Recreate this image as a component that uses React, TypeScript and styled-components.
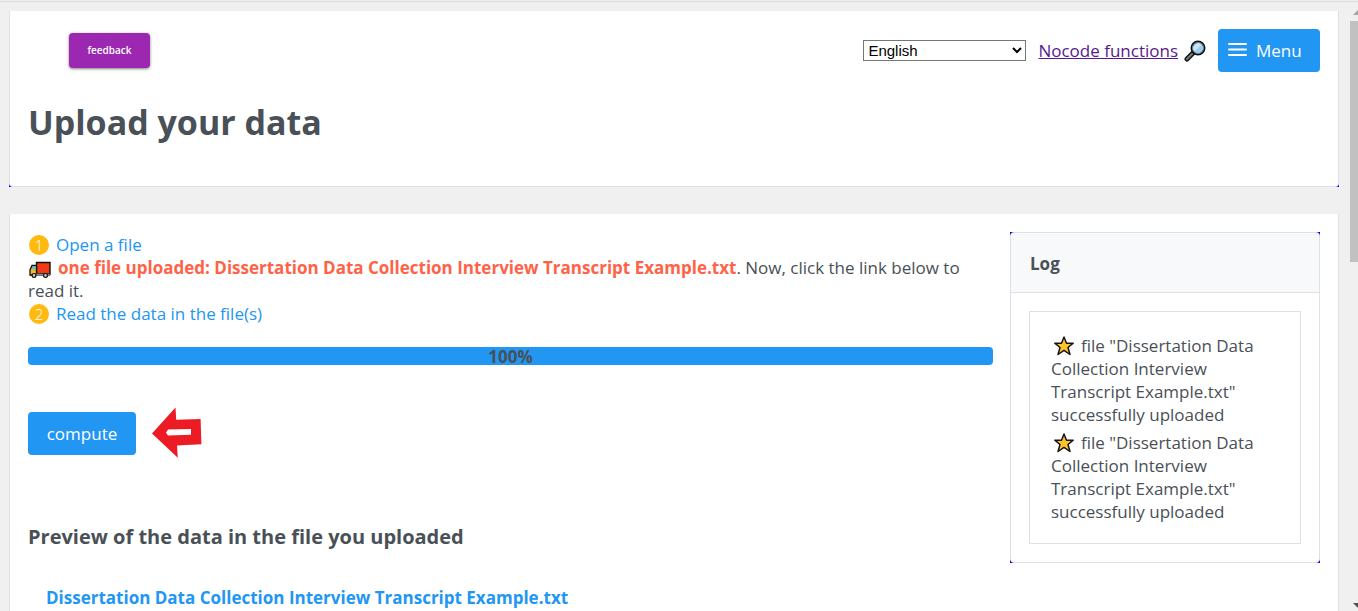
import React from "react";
import styled, { createGlobalStyle } from "styled-components";

const GlobalStyle = createGlobalStyle`
  * { box-sizing: border-box; }
  body {
    margin: 0;
    background: #f0f0f0;
    color: #495057;
    font: 400 17px/23px "Segoe UI", "Open Sans", "Noto Sans", sans-serif;
  }
  h1, h2, h3, p, ul { margin: 0; padding: 0; }
  button { font: inherit; cursor: pointer; }
`;

const Frame = styled.div`
  display: flex;
  height: 100vh;
  overflow: hidden;
  border-top: 1px solid #f0f0f0;
`;

const Page = styled.div`
  flex: 1;
  min-width: 0;
  border-top: 1px solid #d9dbdc;
  padding: 9px 11px 0 9px;
  display: flex;
  flex-direction: column;
  gap: 27px;
`;

const ScrollTrack = styled.div`
  width: 8px;
  flex: none;
  display: flex;
  flex-direction: column;
  justify-content: space-between;
  padding: 8px 0 3px;
  overflow: hidden;
  border-top: 1px solid #d9dbdc;
`;

const ScrollTop = styled.div`
  display: flex;
  flex-direction: column;
  gap: 6px;
`;

const ScrollThumb = styled.div`
  height: 241px;
  background: #c1c1c1;
`;

const Arrow = styled.svg`
  display: block;
  flex: none;
  align-self: flex-end;
`;

const BlueEdge = styled.div`
  background: #00f;
`;

const Card = styled.section`
  background: #fff;
  border: 1px solid #dee2e6;
  border-top: 0;
  padding: 18px;
`;

const HeaderCard = styled(Card)`
  border-radius: 0 0 4px 4px;
  padding-bottom: 41px;
`;

const Toolbar = styled.header`
  display: flex;
  align-items: center;
  height: 43px;
`;

const Feedback = styled.button`
  width: 81px;
  height: 35px;
  margin-left: 41px;
  margin-right: auto;
  padding: 0;
  border: 0;
  border-radius: 4px;
  background: #9c27b0;
  box-shadow: 0 1px 3px rgba(0, 0, 0, 0.5);
  color: #fff;
  font-size: 10px;
  font-weight: 600;
`;

const Language = styled.select`
  width: 163px;
  height: 21px;
  margin-right: 12px;
  padding: 0;
  border: 1px solid #767676;
  border-radius: 0;
  background: #fff;
  color: #000;
  font: 15px "Liberation Sans", Arial, sans-serif;
`;

const SiteLink = styled.a`
  color: #551a8b;
  margin-right: 6px;
`;

const Button = styled.button`
  display: flex;
  align-items: center;
  justify-content: center;
  gap: 9px;
  height: 43px;
  padding: 0;
  border: 0;
  border-radius: 4px;
  background: #2196f3;
  color: #fff;
`;

const MenuButton = styled(Button)`
  width: 102px;
  margin-left: 12px;
  padding-left: 10px;
  justify-content: flex-start;
`;

const ComputeButton = styled(Button)`
  width: 108px;
`;

const Title = styled.h1`
  margin-top: 27px;
  font-size: 34px;
  line-height: 46px;
  font-weight: 700;
`;

const Columns = styled.div`
  display: flex;
  align-items: flex-start;
  gap: 17px;
`;

const Main = styled.main`
  flex: 1;
  min-width: 0;
  padding-top: 1px;
`;

const Step = styled.div`
  display: flex;
  align-items: center;
  gap: 7px;
  padding-left: 1px;
`;

const StepNumber = styled.span`
  width: 20px;
  height: 20px;
  border-radius: 50%;
  background: #ffb90f;
  color: #fff;
  font-size: 15px;
  line-height: 20px;
  font-weight: 300;
  text-align: center;
`;

const StepLink = styled.a`
  color: #2196f3;
  text-decoration: none;
`;

const Uploaded = styled.strong`
  color: #ff6347;
  font-weight: 700;
`;

const InlineIcon = styled.svg`
  vertical-align: -4px;
  margin: 0 7px 0 1px;
`;

const Progress = styled.div`
  height: 18px;
  margin: 22px 0 42px;
  border-radius: 4px;
  background: #2196f3;
  text-align: center;
  font-weight: 700;
  line-height: 19px;
`;

const ComputeRow = styled.div`
  display: flex;
  align-items: center;
  gap: 16px;
`;

const PreviewTitle = styled.h2`
  margin-top: 64px;
  font-size: 20px;
  line-height: 28px;
  font-weight: 700;
`;

const FileLink = styled.a`
  display: block;
  margin: 35px 18px 0;
  color: #2196f3;
  font-weight: 700;
  text-decoration: none;
`;

const LogEdge = styled(BlueEdge)`
  width: 310px;
  flex: none;
`;

const LogPanel = styled.aside`
  border: 1px solid #dee2e6;
  border-radius: 4px;
  background: #fff;
  overflow: hidden;
`;

const LogTitle = styled.h3`
  padding: 19px 19px 17px;
  border-bottom: 1px solid #dee2e6;
  background: #f8f9fa;
  font-size: 17px;
  line-height: 23px;
  font-weight: 700;
`;

const LogList = styled.ul`
  margin: 18px;
  padding: 22px 21px 20px;
  border: 1px solid #dee2e6;
  list-style: none;
  display: flex;
  flex-direction: column;
  gap: 5px;
`;

const Magnifier = () => (
  <svg width="22" height="22" viewBox="0 0 22 22" aria-hidden="true">
    <path d="M3 19l7-7" stroke="#111" strokeWidth="5" strokeLinecap="round" />
    <path d="M3 19l5-5" stroke="#6f7b82" strokeWidth="2.2" strokeLinecap="round" />
    <circle cx="14" cy="8" r="6.4" fill="#9bcdf0" stroke="#111" strokeWidth="2.2" />
    <circle cx="14" cy="8" r="5.6" fill="none" stroke="#7c8a92" strokeWidth="0.9" />
    <path d="M10.5 11.5a5 5 0 0 1 7-7z" fill="#c6e5fa" />
  </svg>
);

const Bars = () => (
  <svg width="19" height="20" viewBox="0 0 19 20" aria-hidden="true">
    <path d="M1 3h17M1 8.5h17M1 14h17" stroke="#fff" strokeWidth="2" strokeLinecap="round" />
  </svg>
);

const Truck = () => (
  <InlineIcon width="22" height="18" viewBox="0 0 22 18" aria-hidden="true">
    <path d="M7.5 2.5H21V14H7.5z" fill="#f23a16" stroke="#111" strokeWidth="1.4" />
    <path d="M1 15v-5l2-4.5h4.5V15z" fill="#fcb813" stroke="#111" strokeWidth="1.3" />
    <path d="M2.4 9.6L3.8 6.6h3v3z" fill="#3fc8ee" />
    <path d="M7 13.8h14v1.6H1z" fill="#aaa" stroke="#222" strokeWidth="0.6" />
    <circle cx="5" cy="15.4" r="1.9" fill="#ccc" stroke="#111" strokeWidth="1.2" />
    <circle cx="16.5" cy="15.4" r="1.9" fill="#ccc" stroke="#111" strokeWidth="1.2" />
  </InlineIcon>
);

const Star = () => (
  <InlineIcon width="22" height="20" viewBox="0 0 22 20" aria-hidden="true">
    <path
      d="M12 1l2.5 6.2h6.7l-5.2 4.3 2 7-6-4.1-6 4.1 2-7-5.2-4.3h6.7z"
      fill="#ffc32e"
      stroke="#151515"
      strokeWidth="1.5"
      strokeLinejoin="round"
    />
  </InlineIcon>
);

const RedArrow = () => (
  <svg width="50" height="52" viewBox="0 0 50 52" aria-hidden="true">
    <path
      d="M0 26.5L23.5 0.5 24.2 12.8 48.6 12 49.4 37.2 25 38.4 25.8 50.8zM14 25.7L16 28.4 39 27.8V22L16 22.6z"
      fill="#ed1c24"
      fillRule="evenodd"
    />
  </svg>
);

const logEntries = [1, 2];

export default function App() {
  return (
    <>
      <GlobalStyle />
      <Frame>
        <Page>
          <BlueEdge>
            <HeaderCard>
              <Toolbar>
                <Feedback type="button">feedback</Feedback>
                <Language aria-label="Language" defaultValue="en">
                  <option value="en">English</option>
                </Language>
                <SiteLink href="#home">Nocode functions</SiteLink>
                <Magnifier />
                <MenuButton type="button">
                  <Bars />
                  Menu
                </MenuButton>
              </Toolbar>
              <Title>Upload your data</Title>
            </HeaderCard>
          </BlueEdge>

          <Card>
            <Columns>
              <Main>
                <Step>
                  <StepNumber>1</StepNumber>
                  <StepLink href="#open">Open a file</StepLink>
                </Step>
                <p>
                  <Truck />
                  <Uploaded>
                    one file uploaded: Dissertation Data Collection Interview Transcript Example.txt
                  </Uploaded>
                  . Now, click the link below to read it.
                </p>
                <Step>
                  <StepNumber>2</StepNumber>
                  <StepLink href="#read">Read the data in the file(s)</StepLink>
                </Step>
                <Progress role="progressbar" aria-label="Reading" aria-valuenow={100}>
                  100%
                </Progress>
                <ComputeRow>
                  <ComputeButton type="button">compute</ComputeButton>
                  <RedArrow />
                </ComputeRow>
                <PreviewTitle>Preview of the data in the file you uploaded</PreviewTitle>
                <FileLink href="#file">
                  Dissertation Data Collection Interview Transcript Example.txt
                </FileLink>
              </Main>
              <LogEdge>
                <LogPanel>
                  <LogTitle>Log</LogTitle>
                  <LogList>
                    {logEntries.map((entry) => (
                      <li key={entry}>
                        <Star />
                        file "Dissertation Data Collection Interview Transcript Example.txt"
                        successfully uploaded
                      </li>
                    ))}
                  </LogList>
                </LogPanel>
              </LogEdge>
            </Columns>
          </Card>
        </Page>
        <ScrollTrack aria-hidden="true">
          <ScrollTop>
            <Arrow width="5" height="5" viewBox="0 0 5 5">
              <path d="M5 0v5H0z" fill="#a3a3a3" />
            </Arrow>
            <ScrollThumb />
          </ScrollTop>
          <Arrow width="5" height="5" viewBox="0 0 5 5">
            <path d="M0 0h5v5z" fill="#505050" />
          </Arrow>
        </ScrollTrack>
      </Frame>
    </>
  );
}
